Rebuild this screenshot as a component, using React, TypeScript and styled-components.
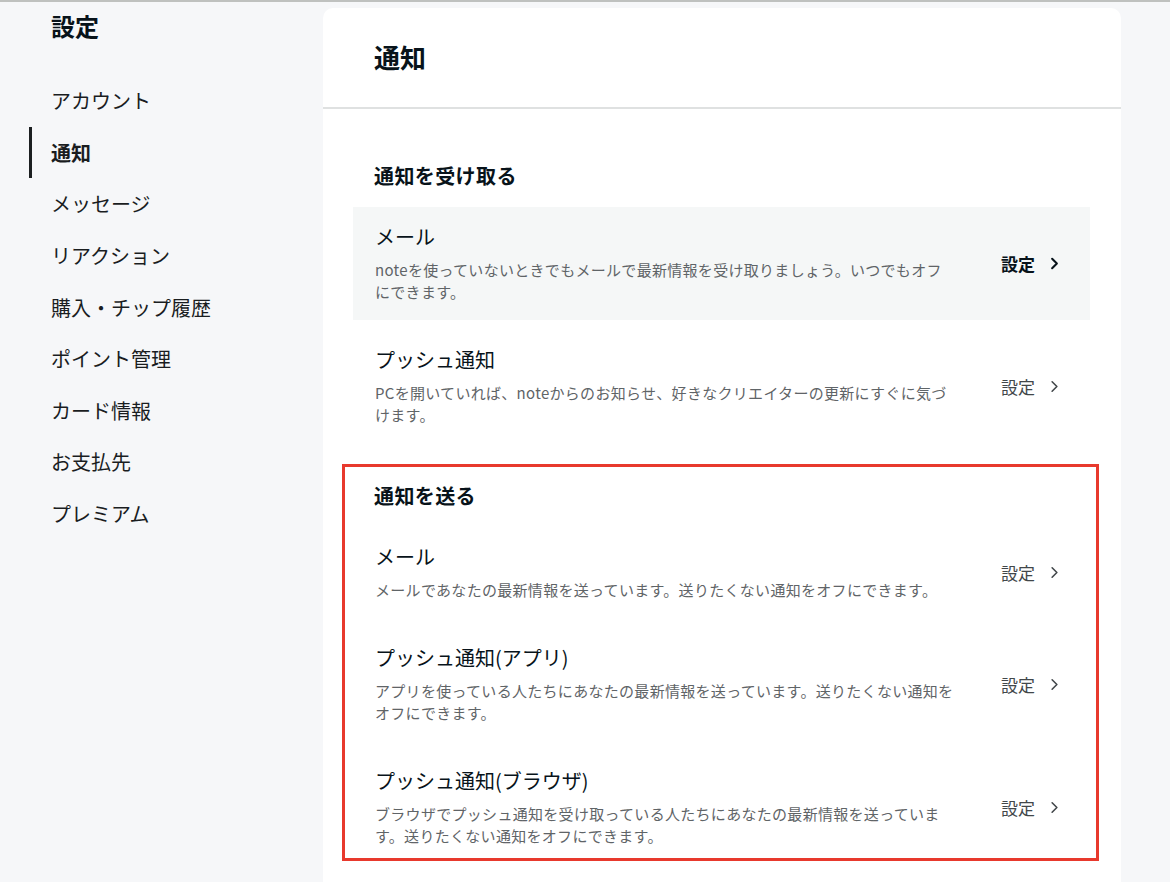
import styled, { createGlobalStyle } from "styled-components";
import { ChevronRight } from "lucide-react";

type Item = {
  title: string;
  description: string;
  active?: boolean;
};

const NAV_ITEMS = [
  "アカウント",
  "通知",
  "メッセージ",
  "リアクション",
  "購入・チップ履歴",
  "ポイント管理",
  "カード情報",
  "お支払先",
  "プレミアム",
];

const RECEIVE: Item[] = [
  {
    title: "メール",
    description:
      "noteを使っていないときでもメールで最新情報を受け取りましょう。いつでもオフにできます。",
    active: true,
  },
  {
    title: "プッシュ通知",
    description:
      "PCを開いていれば、noteからのお知らせ、好きなクリエイターの更新にすぐに気づけます。",
  },
];

const SEND: Item[] = [
  {
    title: "メール",
    description:
      "メールであなたの最新情報を送っています。送りたくない通知をオフにできます。",
  },
  {
    title: "プッシュ通知(アプリ)",
    description:
      "アプリを使っている人たちにあなたの最新情報を送っています。送りたくない通知をオフにできます。",
  },
  {
    title: "プッシュ通知(ブラウザ)",
    description:
      "ブラウザでプッシュ通知を受け取っている人たちにあなたの最新情報を送っています。送りたくない通知をオフにできます。",
  },
];

const SettingRow = ({ item }: { item: Item }) => (
  <Row $active={!!item.active}>
    <RowText>
      <RowTitle>{item.title}</RowTitle>
      <RowDescription>{item.description}</RowDescription>
    </RowText>
    <RowLink $active={!!item.active}>
      設定
      <ChevronRight size={19} strokeWidth={item.active ? 2.6 : 2} />
    </RowLink>
  </Row>
);

export default function App() {
  return (
    <>
      <GlobalStyle />
      <Page>
        <Sidebar>
          <SidebarTitle>設定</SidebarTitle>
          <NavList>
            {NAV_ITEMS.map((label) => (
              <NavItem key={label} $active={label === "通知"}>
                {label}
              </NavItem>
            ))}
          </NavList>
        </Sidebar>

        <Card>
          <CardHeader>
            <CardTitle>通知</CardTitle>
          </CardHeader>
          <CardBody>
            <Section>
              <SectionTitle>通知を受け取る</SectionTitle>
              <RowList>
                {RECEIVE.map((item) => (
                  <SettingRow key={item.title} item={item} />
                ))}
              </RowList>
            </Section>

            <HighlightedSection>
              <SectionTitle>通知を送る</SectionTitle>
              <RowList>
                {SEND.map((item) => (
                  <SettingRow key={item.title} item={item} />
                ))}
              </RowList>
            </HighlightedSection>
          </CardBody>
        </Card>
      </Page>
    </>
  );
}

const GlobalStyle = createGlobalStyle`
  html, body {
    margin: 0;
    padding: 0;
    background: #f6f7f9;
    font-family: "Noto Sans CJK JP", "Noto Sans", sans-serif;
    color: #08131a;
  }
  body {
    border-top: 2px solid #bfc1bf;
    height: 880px;
    overflow: hidden;
  }
`;

const Page = styled.div`
  display: flex;
  align-items: flex-start;
  padding-top: 6px;
`;

const Sidebar = styled.aside`
  width: 294px;
  flex-shrink: 0;
  padding-left: 29px;
`;

const SidebarTitle = styled.h1`
  margin: 2px 0 0;
  padding-left: 22px;
  font-size: 24px;
  line-height: 32px;
  font-weight: 700;
`;

const NavList = styled.ul`
  list-style: none;
  margin: 33px 0 0;
  padding: 0;
`;

const NavItem = styled.li<{ $active: boolean }>`
  height: 51.6px;
  display: flex;
  align-items: center;
  padding-left: 19px;
  border-left: 3px solid ${({ $active }) => ($active ? "#1c1f21" : "transparent")};
  font-size: 20px;
  font-weight: ${({ $active }) => ($active ? 700 : 400)};
  color: #1a1d1f;
`;

const Card = styled.main`
  width: 798px;
  min-height: 900px;
  background: #fff;
  border-radius: 10px 10px 0 0;
`;

const CardHeader = styled.header`
  padding: 33px 51px 34px;
  border-bottom: 2px solid #dfe1e1;
`;

const CardTitle = styled.h2`
  margin: 0;
  font-size: 26px;
  line-height: 32px;
  font-weight: 700;
`;

const CardBody = styled.div`
  padding: 55px 31px 0 30px;
`;

const Section = styled.section`
  margin-bottom: 21px;
`;

const HighlightedSection = styled.section`
  margin: 0 -9px 0 -11px;
  padding: 17px 6px 0 8px;
  border: 3px solid #e8392d;

  & li:last-child {
    padding-bottom: 11px;
  }
`;

const SectionTitle = styled.h3`
  margin: 0 0 19px;
  padding-left: 21px;
  font-size: 20px;
  line-height: 24px;
  font-weight: 700;
  letter-spacing: 0.02em;
`;

const RowList = styled.ul`
  list-style: none;
  margin: 0;
  padding: 0;
  display: flex;
  flex-direction: column;
  gap: 10px;
`;

const Row = styled.li<{ $active: boolean }>`
  display: flex;
  align-items: center;
  justify-content: space-between;
  padding: 16px 26px 17px 22px;
  background: ${({ $active }) => ($active ? "#f5f7f7" : "transparent")};
`;

const RowText = styled.div`
  width: 581px;
`;

const RowTitle = styled.div`
  font-size: 20px;
  line-height: 28px;
  color: #08131a;
`;

const RowDescription = styled.p`
  margin: 8px 0 0;
  font-size: 15px;
  line-height: 22px;
  letter-spacing: 0.02em;
  color: #5f6467;
`;

const RowLink = styled.div<{ $active: boolean }>`
  display: flex;
  align-items: center;
  gap: 10px;
  font-size: 17px;
  font-weight: ${({ $active }) => ($active ? 700 : 400)};
  color: ${({ $active }) => ($active ? "#08131a" : "#42474a")};
  white-space: nowrap;

  & > svg {
    margin-top: 1px;
  }
`;
